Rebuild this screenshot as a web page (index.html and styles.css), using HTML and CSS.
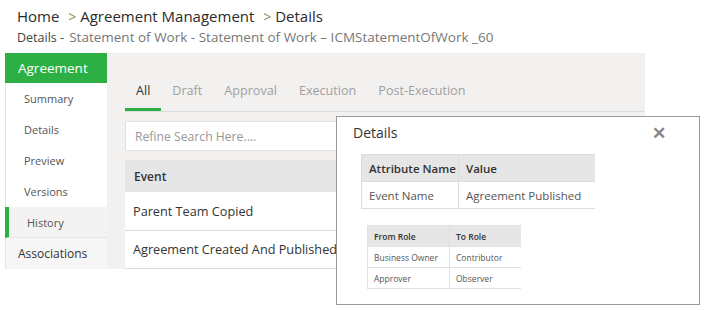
FILE: index.html
```html
<!DOCTYPE html>
<html lang="en">

<head>
    <meta charset="UTF-8">
    <title>History</title>
    <link rel="stylesheet" href="styles.css">
</head>

<body>
    <div class="page">
        <div class="crumbs">
            <span>Home</span>
            <span class="sep">&gt;</span>
            <span>Agreement Management</span>
            <span class="sep">&gt;</span>
            <span>Details</span>
        </div>
        <div class="subtitle">
            <span class="sub-label">Details -</span>
            <span class="sub-name">Statement of Work - Statement of Work &ndash; ICMStatementOfWork _60</span>
        </div>

        <div class="main">
            <ul class="side">
                <li class="side-head">Agreement</li>
                <li>Summary</li>
                <li>Details</li>
                <li>Preview</li>
                <li>Versions</li>
                <li class="active">History</li>
                <li class="side-group">Associations</li>
            </ul>

            <div class="content">
                <ul class="tabs">
                    <li class="current">All</li>
                    <li>Draft</li>
                    <li>Approval</li>
                    <li>Execution</li>
                    <li>Post-Execution</li>
                </ul>
                <input class="search" type="text" placeholder="Refine Search Here....">
                <table class="events">
                    <thead>
                        <tr><th>Event</th></tr>
                    </thead>
                    <tbody>
                        <tr><td>Parent Team Copied</td></tr>
                        <tr><td>Agreement Created And Published</td></tr>
                    </tbody>
                </table>
            </div>
        </div>

        <!-- 详情弹窗 -->
        <div class="modal">
            <div class="modal-head">
                <span class="modal-title">Details</span>
                <span class="close">&#x2715;</span>
            </div>
            <table class="attrs">
                <tr><th>Attribute Name</th><th>Value</th></tr>
                <tr><td>Event Name</td><td>Agreement Published</td></tr>
            </table>
            <table class="roles">
                <tr><th>From Role</th><th>To Role</th></tr>
                <tr><td>Business Owner</td><td>Contributor</td></tr>
                <tr><td>Approver</td><td>Observer</td></tr>
            </table>
        </div>
    </div>
</body>

</html>
```

FILE: styles.css
```css
:root {
    --green: #2db043;
    --panel: #f2f1f0;
    --line: #dcdcdc;
    --head: #e6e6e6;
}

* {
    padding: 0;
    margin: 0;
    box-sizing: border-box;
}

body {
    background-color: #fff;
    font-family: "Open Sans", "Noto Sans", sans-serif;
    color: #333;
}

.page {
    position: relative;
    width: 721px;
    height: 310px;
}

/* 面包屑 */
.crumbs {
    padding: 5px 0 0 17px;
    height: 27px;
    font-size: 15px;
    line-height: 22px;
    color: #2b2b2b;
}

.crumbs .sep {
    margin-left: 5px;
    color: #8c8f5c;
    font-size: 14px;
}

.subtitle {
    padding-left: 17px;
    height: 26px;
    line-height: 18px;
}

.subtitle .sub-label {
    font-size: 12.5px;
    color: #444;
}

.subtitle .sub-name {
    margin-left: 1px;
    font-size: 13.5px;
    color: #777;
}

.main {
    display: flex;
    height: 216px;
}

/* 左侧菜单 */
.side {
    list-style: none;
    width: 102px;
    margin-left: 5px;
    border-left: 1px solid #e4e4e4;
}

.side li {
    height: 31px;
    line-height: 31px;
    padding-left: 18px;
    font-size: 11px;
    color: #555;
}

.side .side-head {
    height: 30px;
    line-height: 30px;
    padding-left: 13px;
    margin-left: -1px;
    font-size: 13.5px;
    color: #fff;
    background-color: var(--green);
}

.side .active {
    padding-left: 18px;
    margin-left: -1px;
    border-left: 4px solid var(--green);
    background-color: #f3f3f3;
    border-bottom: 1px solid #e4e4e4;
}

.side .side-group {
    padding-left: 12px;
    font-size: 12px;
    color: #333;
    background-color: #f6f6f6;
}

/* 右侧内容 */
.content {
    width: 538px;
    padding: 27px 0 0 18px;
    background-color: var(--panel);
}

.tabs {
    display: flex;
    list-style: none;
    border-bottom: 1px solid var(--line);
}

.tabs li {
    padding: 0 11px 6px;
    font-size: 12.6px;
    line-height: 22px;
    color: #a0a0a0;
    border-bottom: 3px solid transparent;
}

.tabs .current {
    color: #333;
    border-bottom-color: var(--green);
}

.search {
    display: block;
    width: 520px;
    height: 30px;
    margin-top: 9px;
    padding-left: 9px;
    border: 1px solid #e2e2e2;
    font-family: inherit;
    font-size: 12.2px;
    outline: none;
}

.search::placeholder {
    color: #999;
}

.events {
    width: 520px;
    margin-top: 9px;
    border-collapse: collapse;
    background-color: #fff;
}

.events th {
    height: 32px;
    padding-left: 9px;
    text-align: left;
    font-size: 12px;
    font-weight: 600;
    background-color: var(--head);
}

.events td {
    height: 38px;
    padding-left: 8px;
    font-size: 12.7px;
    color: #333;
    border-bottom: 1px solid var(--line);
}

/* 弹窗 */
.modal {
    position: absolute;
    left: 336px;
    top: 116px;
    width: 364px;
    height: 189px;
    padding: 0 0 0 24px;
    background-color: #fff;
    border: 1px solid #999;
}

.modal-head {
    display: flex;
    justify-content: space-between;
    align-items: center;
    height: 30px;
    margin-left: -8px;
    padding-right: 33px;
}

.modal-title {
    font-size: 14px;
    color: #333;
}

.close {
    font-size: 17px;
    font-weight: 700;
    color: #888;
}

.modal table {
    border-collapse: collapse;
    text-align: left;
    white-space: nowrap;
}

.attrs {
    width: 234px;
    margin-top: 7px;
}

.attrs th,
.attrs td {
    height: 27px;
    padding-left: 7px;
    font-size: 11.5px;
    border: 1px solid #ddd;
    border-right: none;
}

.attrs th {
    font-weight: 600;
    background-color: var(--head);
}

.attrs td {
    color: #555;
}

.attrs th:first-child,
.attrs td:first-child {
    width: 97px;
}

.roles {
    width: 154px;
    margin: 16px 0 0 6px;
}

.roles th,
.roles td {
    height: 21px;
    padding-left: 6px;
    font-size: 8.5px;
    border: 1px solid #e0e0e0;
    border-right: none;
}

.roles th {
    font-weight: 600;
    background-color: var(--head);
}

.roles td {
    color: #555;
}

.roles th:first-child,
.roles td:first-child {
    width: 82px;
}
```
